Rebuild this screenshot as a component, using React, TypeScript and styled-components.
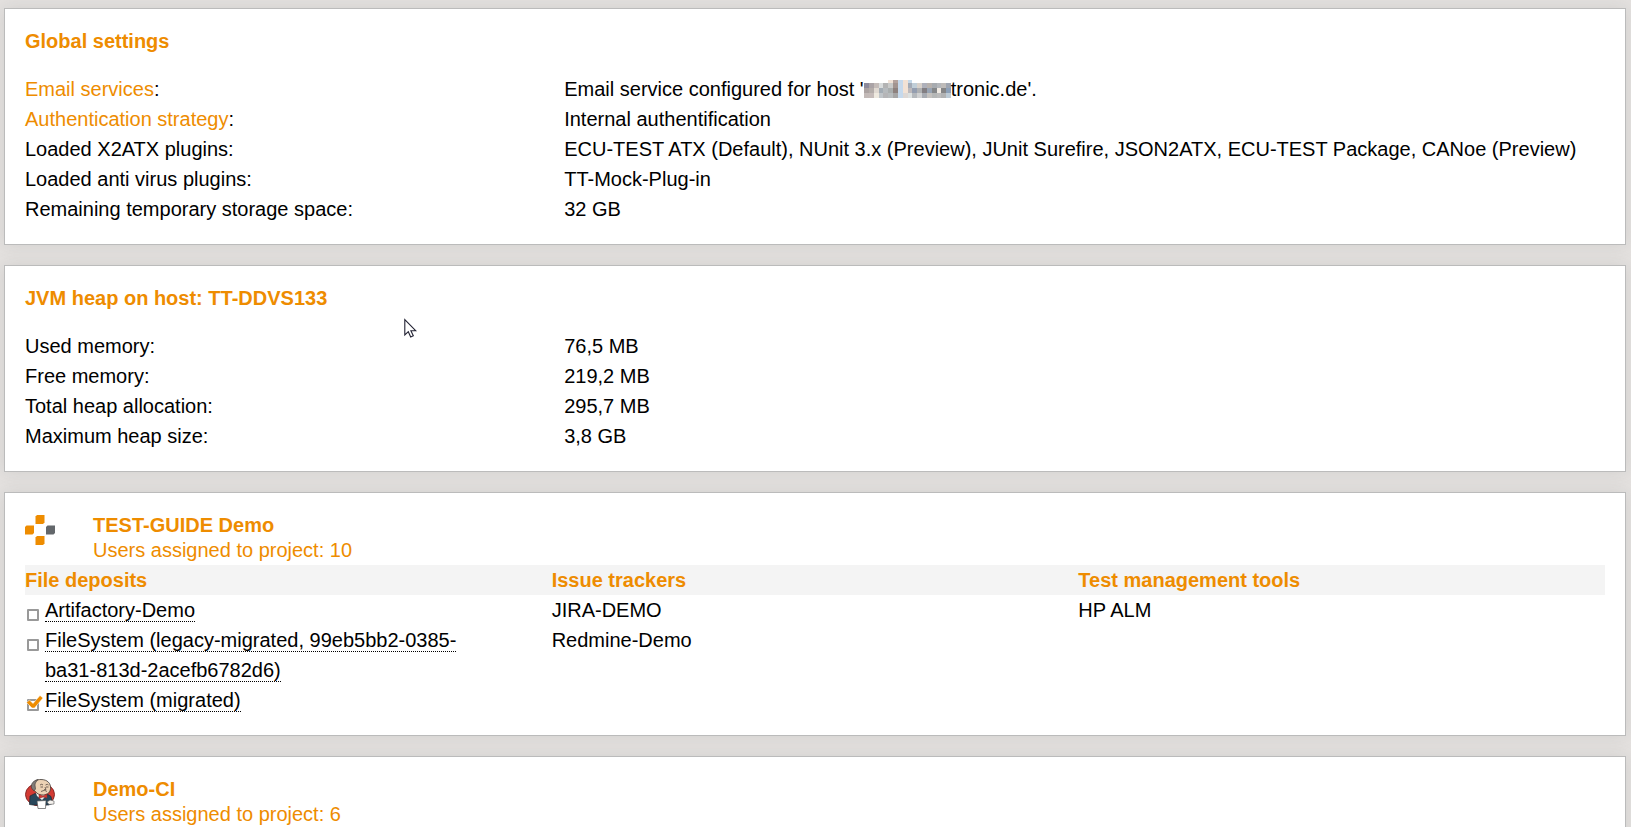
import React from "react";
import styled, { createGlobalStyle } from "styled-components";

const GlobalStyle = createGlobalStyle`
  body {
    margin: 0;
    background: #e4e1df;
    color: #000;
    font: 20px/30px "Liberation Sans", Arial, sans-serif;
  }
`;

const Page = styled.main`
  position: relative;
  display: flex;
  flex-direction: column;
  gap: 20px;
  padding: 8px 5px 20px 4px;
  height: 100vh;
  box-sizing: border-box;
  overflow: hidden;
`;

const Panel = styled.section`
  flex: none;
  padding: 20px;
  background: #fff;
  border: 1px solid #bbb;
  box-shadow: 0 0 16px rgba(90, 100, 100, 0.14);
`;

const Title = styled.h2`
  margin: 0;
  font-size: 20px;
  line-height: 25px;
  font-weight: bold;
  color: #ee8c00;
`;

const Settings = styled.dl`
  display: grid;
  grid-template-columns: 34fr 66fr;
  margin: 20px 0 0;
`;

const Term = styled.dt`
  margin: 0;
`;

const Value = styled.dd`
  margin: 0;
  padding-left: 2px;
`;

const Link = styled.a`
  color: #ee8c00;
  text-decoration: none;
`;

const ProjectHeader = styled.header`
  display: flex;
  gap: 38px;
  padding-bottom: 2px;
`;

const ProjectIcon = styled.svg`
  flex: none;
  width: 30px;
  height: 30px;
  margin-top: 2px;
`;

const Users = styled.p`
  margin: 0;
  line-height: 25px;
  color: #ee8c00;
`;

const Table = styled.table`
  width: 100%;
  table-layout: fixed;
  border-collapse: collapse;
`;

const HeadCell = styled.th`
  padding: 0;
  text-align: left;
  color: #ee8c00;
  background: #f4f4f4;
`;

const Cell = styled.td`
  padding: 0 50px 0 0;
  vertical-align: top;
`;

const Deposit = styled.div`
  display: flex;
  gap: 4px;
  padding-left: 1px;
`;

const TickArea = styled.span`
  position: relative;
  flex: none;
  width: 15px;
  height: 30px;
`;

const Tick = styled.input`
  appearance: none;
  display: block;
  box-sizing: border-box;
  width: 12px;
  height: 12px;
  margin: 14px 0 0 1px;
  border: 2px solid #999;
  border-radius: 1px;
  background: #fff;
`;

const TickMark = styled.svg`
  position: absolute;
  left: 0;
  top: 9px;
  pointer-events: none;
`;

const DepositName = styled.label`
  border-bottom: 1px dotted #000;
`;

const Redaction = styled.svg`
  vertical-align: -2px;
`;

const Pointer = styled.svg`
  position: absolute;
  left: 404px;
  top: 318px;
  pointer-events: none;
`;

const mosaic = [
  ["#fff", "#fff", "#fff", "#fff", "#fff", "#f1e3d8", "#b3a29d", "#c6d9ec", "#f2e2d5", "#c4d8e9", "#fff", "#fff", "#fff", "#fff", "#fff", "#fff", "#fff", "#fff"],
  ["#8d8a9b", "#aaa3a6", "#c4bcb9", "#d9dcdc", "#b3b3b3", "#c9cac9", "#a29490", "#c6d9ec", "#f2e2d5", "#a3abb7", "#c0ced8", "#d8d1ca", "#aeb0ba", "#b7b1ad", "#a7abb0", "#b4b7bb", "#bebbb9", "#9ea5b1"],
  ["#aca3a2", "#b4adaa", "#e0d9d2", "#a3acb4", "#b6babd", "#a9adad", "#8d817e", "#c6d9ec", "#f2e2d5", "#bdb9bb", "#949eb0", "#afb1b3", "#827e82", "#98a4b4", "#858789", "#f0eae3", "#858586", "#8ca0b8"],
  ["#c3bab8", "#c5bbb9", "#eee9df", "#c0c5c9", "#b5b5b7", "#b7bbbd", "#a6a5a5", "#c6d9ec", "#ddd8d5", "#dce1e1", "#b5b9bd", "#d0d1d2", "#a7abb2", "#c4c1be", "#b5b7b7", "#bcbcbc", "#b1b2b3", "#bccad5"],
];

function RedactedHost() {
  return (
    <Redaction width="87" height="18" viewBox="0 0 18 18" preserveAspectRatio="none" shapeRendering="crispEdges" aria-hidden="true">
      {mosaic.map((row, y) =>
        row.map((fill, x) => (
          <rect key={`${x}-${y}`} x={x} y={y === 0 ? 0 : y * 5 - 2} width="1" height={y === 0 ? 3 : 5} fill={fill} />
        ))
      )}
    </Redaction>
  );
}

function CrossLogo() {
  return (
    <ProjectIcon viewBox="0 0 30 30" aria-hidden="true">
      <path d="M12 0h7.500v7.500l-1.500 1.500h-7.500V1.500z" fill="#ee8c00" />
      <path d="M1.500 10.500H9V18l-1.500 1.500H0V12z" fill="#ee8c00" />
      <path d="M22.500 10.500H30V18l-1.500 1.500H21V12z" fill="#63676b" />
      <path d="M12 21h7.500v7.500L18 30h-7.500v-7.500z" fill="#ee8c00" />
    </ProjectIcon>
  );
}

function ButlerLogo() {
  return (
    <ProjectIcon viewBox="0 0 30 30" aria-hidden="true">
      <ellipse cx="15" cy="15.500" rx="14.500" ry="11.500" fill="#d33a33" stroke="#852b29" />
      <path d="M4.500 25.500L5 17l5-2.500 7 3 6-2 3 2 1.500 7-4 1.500H8z" fill="#28465a" stroke="#1d2a33" strokeWidth=".7" />
      <path d="M11 14l1 3 5 4 4-4-1-3z" fill="#f3f1ed" />
      <path d="M7.500 8C7 2 12 .5 16 .5c6.500 0 10 4 9.500 9-.2 4-3 6-7 6.500-3 .2-7-1-8-3.500C9 12 8 10.500 7.500 8z" fill="#ecd2b4" stroke="#3d3835" strokeWidth=".8" />
      <path d="M6.500 9C5.500 4 9 1.500 13 .5c-2 2-3 4-3 5.500l.5 4L9 12z" fill="#817b77" stroke="#3d3835" strokeWidth=".6" />
      <path d="M15 6q2-1.500 3 0M20.500 6q2-1.500 3 0M15.500 8h2.500M21 8h2.500M20 8l1 2.500-2 .3M16 12.500q4-2.500 6 0" fill="none" stroke="#554840" strokeWidth=".8" />
      <path d="M14 15.500l4 1.500 4-2v4l-4-1-4 1.500z" fill="#d33a33" stroke="#852b29" strokeWidth=".5" />
      <path d="M12 22l9-.5-.5 8h-7.500z" fill="#fff" stroke="#555" strokeWidth=".7" />
      <path d="M22 23l3-2 4 1v3l-5 .5z" fill="#f5f2ee" stroke="#555" strokeWidth=".6" />
    </ProjectIcon>
  );
}

interface DepositItemProps {
  id: string;
  name: string;
  checked?: boolean;
}

function DepositItem({ id, name, checked = false }: DepositItemProps) {
  return (
    <Deposit>
      <TickArea>
        <Tick type="checkbox" id={id} checked={checked} readOnly />
        {checked && (
          <TickMark width="18" height="16" viewBox="0 0 18 16" aria-hidden="true">
            <path d="M.5 8.500L3.500 6l3.500 3.500L14 1.500l3 2.500L8.500 14H6z" fill="#ee8c00" stroke="#fff" strokeWidth=".5" />
          </TickMark>
        )}
      </TickArea>
      <div>
        <DepositName htmlFor={id}>{name}</DepositName>
      </div>
    </Deposit>
  );
}

interface Setting {
  term: React.ReactNode;
  value: React.ReactNode;
}

const globalSettings: Setting[] = [
  {
    term: <><Link href="#email">Email services</Link>:</>,
    value: <>Email service configured for host '<RedactedHost />tronic.de'.</>,
  },
  {
    term: <><Link href="#authentication">Authentication strategy</Link>:</>,
    value: "Internal authentification",
  },
  {
    term: "Loaded X2ATX plugins:",
    value: "ECU-TEST ATX (Default), NUnit 3.x (Preview), JUnit Surefire, JSON2ATX, ECU-TEST Package, CANoe (Preview)",
  },
  { term: "Loaded anti virus plugins:", value: "TT-Mock-Plug-in" },
  { term: "Remaining temporary storage space:", value: "32 GB" },
];

const heapSettings: Setting[] = [
  { term: "Used memory:", value: "76,5 MB" },
  { term: "Free memory:", value: "219,2 MB" },
  { term: "Total heap allocation:", value: "295,7 MB" },
  { term: "Maximum heap size:", value: "3,8 GB" },
];

function SettingsList({ items }: { items: Setting[] }) {
  return (
    <Settings>
      {items.map((item, i) => (
        <React.Fragment key={i}>
          <Term>{item.term}</Term>
          <Value>{item.value}</Value>
        </React.Fragment>
      ))}
    </Settings>
  );
}

const projectRows = [
  { name: "Artifactory-Demo", checked: false, tracker: "JIRA-DEMO", tool: "HP ALM" },
  { name: "FileSystem (legacy-migrated, 99eb5bb2-0385-ba31-813d-2acefb6782d6)", checked: false, tracker: "Redmine-Demo", tool: "" },
  { name: "FileSystem (migrated)", checked: true, tracker: "", tool: "" },
];

export default function App() {
  return (
    <>
      <GlobalStyle />
      <Page>
        <Panel>
          <Title>Global settings</Title>
          <SettingsList items={globalSettings} />
        </Panel>
        <Panel>
          <Title>JVM heap on host: TT-DDVS133</Title>
          <SettingsList items={heapSettings} />
        </Panel>
        <Panel>
          <ProjectHeader>
            <CrossLogo />
            <div>
              <Title>TEST-GUIDE Demo</Title>
              <Users>Users assigned to project: 10</Users>
            </div>
          </ProjectHeader>
          <Table>
            <thead>
              <tr>
                <HeadCell scope="col">File deposits</HeadCell>
                <HeadCell scope="col">Issue trackers</HeadCell>
                <HeadCell scope="col">Test management tools</HeadCell>
              </tr>
            </thead>
            <tbody>
              {projectRows.map((row, i) => (
                <tr key={row.name}>
                  <Cell><DepositItem id={`deposit-${i}`} name={row.name} checked={row.checked} /></Cell>
                  <Cell>{row.tracker}</Cell>
                  <Cell>{row.tool}</Cell>
                </tr>
              ))}
            </tbody>
          </Table>
        </Panel>
        <Panel>
          <ProjectHeader>
            <ButlerLogo />
            <div>
              <Title>Demo-CI</Title>
              <Users>Users assigned to project: 6</Users>
            </div>
          </ProjectHeader>
        </Panel>
        <Pointer width="13" height="21" viewBox="0 0 13 21" aria-hidden="true">
          <path d="M.8 1.500v15.500l3.500-3.300 2.400 5.300 2.600-1.200-2.400-5h5z" fill="#fff" stroke="#223" strokeWidth="1.100" />
        </Pointer>
      </Page>
    </>
  );
}
